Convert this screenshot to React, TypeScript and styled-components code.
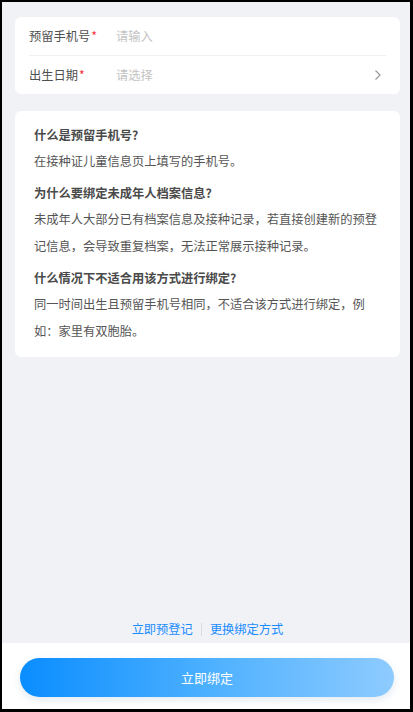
import styled, { createGlobalStyle } from 'styled-components'

const GlobalStyle = createGlobalStyle`
  html, body {
    margin: 0;
    padding: 0;
    height: 100%;
  }
  body {
    font-family: "Noto Sans CJK SC", "Noto Sans", sans-serif;
    background: #000;
  }
  #root {
    height: 100%;
  }
`

const Frame = styled.div`
  box-sizing: border-box;
  height: 100vh;
  border-style: solid;
  border-color: #000;
  border-width: 2px 3px 3px 2px;
  background: #f1f2f6;
  display: flex;
  flex-direction: column;
`

const Content = styled.main`
  flex: 1;
  display: flex;
  flex-direction: column;
  gap: 17px;
  padding: 15px 10px 0 13px;
`

const Card = styled.section`
  background: #fff;
  border-radius: 6px;
`

const FormCard = styled(Card)`
  padding: 0 14px;
`

const Row = styled.div<{ $divider?: boolean }>`
  display: flex;
  align-items: center;
  height: 38px;
  border-bottom: ${p => (p.$divider ? '1px solid #eeeff2' : 'none')};
`

const Label = styled.span`
  width: 87px;
  flex-shrink: 0;
  font-size: 12.25px;
  color: #4f4f4f;
`

const Star = styled.span`
  color: #f5222d;
  margin-left: 1px;
`

const Placeholder = styled.span`
  flex: 1;
  font-size: 12.25px;
  color: #c3c3c3;
`

const Chevron = styled.svg`
  width: 8px;
  height: 12px;
  margin-right: 4px;
`

const InfoCard = styled(Card)`
  padding: 14px 19px 12px 19px;
`

const Question = styled.h3<{ $first?: boolean }>`
  margin: ${p => (p.$first ? '0' : '8px')} 0 3px;
  font-size: 12.25px;
  line-height: 20px;
  font-weight: 700;
  color: #4a4a4a;
`

const Answer = styled.p`
  margin: 0;
  font-size: 12.25px;
  line-height: 27px;
  color: #555;
`

const Spacer = styled.div`
  flex: 1;
`

const Links = styled.div`
  display: flex;
  justify-content: center;
  align-items: center;
  gap: 8px;
  height: 20px;
  padding-bottom: 4px;
`

const LinkText = styled.a`
  font-size: 12.25px;
  color: #1a8cff;
  text-decoration: none;
  cursor: pointer;
`

const Sep = styled.span`
  width: 1px;
  height: 13px;
  background: #dcdcdc;
`

const Footer = styled.footer`
  background: #fff;
  padding: 15px 16px 12px 18px;
`

const BindButton = styled.button`
  width: 100%;
  height: 39px;
  border: none;
  border-radius: 20px;
  background: linear-gradient(90deg, #0a8dff 0%, #4cb0ff 50%, #8ecbff 100%);
  box-shadow: 0 3px 8px rgba(120, 160, 190, 0.22);
  color: #fff;
  font-family: inherit;
  font-size: 13px;
  cursor: pointer;
`

const faqs = [
  {
    q: '什么是预留手机号?',
    a: '在接种证儿童信息页上填写的手机号。',
  },
  {
    q: '为什么要绑定未成年人档案信息?',
    a: '未成年人大部分已有档案信息及接种记录，若直接创建新的预登记信息，会导致重复档案，无法正常展示接种记录。',
  },
  {
    q: '什么情况下不适合用该方式进行绑定?',
    a: '同一时间出生且预留手机号相同，不适合该方式进行绑定，例如：家里有双胞胎。',
  },
]

function App() {
  return (
    <>
      <GlobalStyle />
      <Frame>
        <Content>
          <FormCard>
            <Row $divider>
              <Label>
                预留手机号<Star>*</Star>
              </Label>
              <Placeholder>请输入</Placeholder>
            </Row>
            <Row>
              <Label>
                出生日期<Star>*</Star>
              </Label>
              <Placeholder>请选择</Placeholder>
              <Chevron viewBox="0 0 8 12" fill="none">
                <path d="M1.5 1.5 L6 6 L1.5 10.5" stroke="#9a9a9a" strokeWidth="1.2" />
              </Chevron>
            </Row>
          </FormCard>

          <InfoCard>
            {faqs.map((f, i) => (
              <div key={f.q}>
                <Question $first={i === 0}>{f.q}</Question>
                <Answer>{f.a}</Answer>
              </div>
            ))}
          </InfoCard>

          <Spacer />
          <Links>
            <LinkText>立即预登记</LinkText>
            <Sep />
            <LinkText>更换绑定方式</LinkText>
          </Links>
        </Content>
        <Footer>
          <BindButton>立即绑定</BindButton>
        </Footer>
      </Frame>
    </>
  )
}

export default App
